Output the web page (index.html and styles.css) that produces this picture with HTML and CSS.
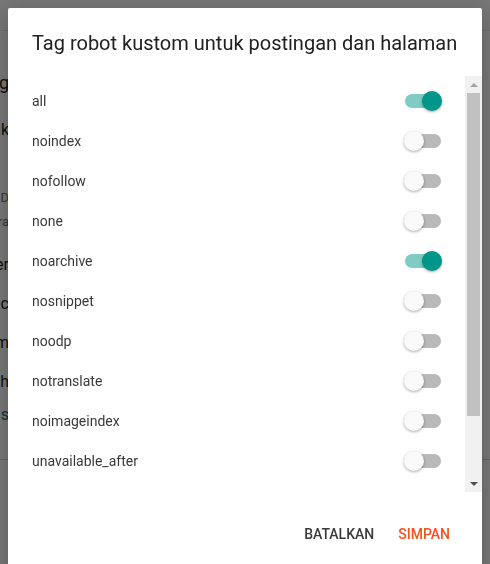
FILE: index.html
```html
<!DOCTYPE html>
<html lang="id">
<head>
    <meta charset="UTF-8">
    <meta name="viewport" content="width=device-width, initial-scale=1.0">
    <title>Tag robot kustom</title>
    <link rel="stylesheet" href="styles.css">
</head>
<body>

<!-- settings page behind the dialog -->
<div class="page">
    <div class="page-header"></div>
    <div class="page-col">
        <div class="page-heading">Crawling</div>
        <div class="page-item page-item-first">Tag robot kustom untuk</div>
        <div class="page-note page-note-first">Deskripsi D</div>
        <div class="page-note">Aktifkan deskripsi para</div>
        <div class="page-item page-item-gap">Tag robot kustom header</div>
        <div class="page-item">Tag robot kustom untuk halaman arsip nc</div>
        <div class="page-item">Tag robot kustom untuk postingan dan halam</div>
        <div class="page-item">Kelola pengalihan h</div>
        <div class="page-link">Pelajari lebih lanjut as</div>
    </div>
    <div class="page-rule"></div>
</div>

<div class="overlay"></div>

<div class="dialog">
    <h2 class="dialog-title">Tag robot kustom untuk postingan dan halaman</h2>

    <div class="dialog-body">
        <div class="robot-list">
            <div class="robot-row">
                <span class="robot-name">all</span>
                <span class="switch on"><span class="switch-track"></span><span class="switch-thumb"></span></span>
            </div>
            <div class="robot-row">
                <span class="robot-name">noindex</span>
                <span class="switch"><span class="switch-track"></span><span class="switch-thumb"></span></span>
            </div>
            <div class="robot-row">
                <span class="robot-name">nofollow</span>
                <span class="switch"><span class="switch-track"></span><span class="switch-thumb"></span></span>
            </div>
            <div class="robot-row">
                <span class="robot-name">none</span>
                <span class="switch"><span class="switch-track"></span><span class="switch-thumb"></span></span>
            </div>
            <div class="robot-row">
                <span class="robot-name">noarchive</span>
                <span class="switch on"><span class="switch-track"></span><span class="switch-thumb"></span></span>
            </div>
            <div class="robot-row">
                <span class="robot-name">nosnippet</span>
                <span class="switch"><span class="switch-track"></span><span class="switch-thumb"></span></span>
            </div>
            <div class="robot-row">
                <span class="robot-name">noodp</span>
                <span class="switch"><span class="switch-track"></span><span class="switch-thumb"></span></span>
            </div>
            <div class="robot-row">
                <span class="robot-name">notranslate</span>
                <span class="switch"><span class="switch-track"></span><span class="switch-thumb"></span></span>
            </div>
            <div class="robot-row">
                <span class="robot-name">noimageindex</span>
                <span class="switch"><span class="switch-track"></span><span class="switch-thumb"></span></span>
            </div>
            <div class="robot-row">
                <span class="robot-name">unavailable_after</span>
                <span class="switch"><span class="switch-track"></span><span class="switch-thumb"></span></span>
            </div>
        </div>

        <!-- scrollbar drawn by hand, the headless browser hides the native one -->
        <div class="scrollbar">
            <div class="scroll-btn"><span class="arrow-up"></span></div>
            <div class="scroll-track"><div class="scroll-thumb"></div></div>
            <div class="scroll-btn"><span class="arrow-down"></span></div>
        </div>
    </div>

    <div class="dialog-actions">
        <button class="btn">Batalkan</button>
        <button class="btn btn-primary">Simpan</button>
    </div>
</div>

</body>
</html>
```

FILE: styles.css
```css
html, body {
    height: 100%;
}

body {
    margin: 0;
    overflow: hidden;
    background-color: #ffffff;
    font-family: Roboto, "Noto Sans", Arial, sans-serif;
    color: #212121;
}

/* page behind */
.page {
    height: 100%;
}

.page-header {
    height: 30px;
    border-bottom: 1px solid #e8e8e8;
    background-color: #f7f7f7;
}

.page-col {
    width: 9px;
    display: flex;
    flex-direction: column;
    align-items: flex-end;
    white-space: nowrap;
    padding-top: 42px;
}

.page-col > div {
    height: 20px;
    line-height: 20px;
}

.page-heading {
    font-size: 18px;
}

.page-item {
    font-size: 16px;
    margin-top: 19px;
    color: #212121;
}

.page-item-first {
    margin-top: 27px;
}

.page-item-gap {
    margin-top: 23px;
}

.page-note {
    font-size: 13px;
    margin-top: 4px;
    color: #757575;
}

.page-note-first {
    margin-top: 48px;
}

.page-link {
    font-size: 16px;
    margin-top: 13px;
    color: #0b7285;
}

.page-rule {
    margin-top: 34px;
    border-top: 1px solid #d6d6d6;
}

.overlay {
    position: fixed;
    inset: 0;
    background-color: rgba(0, 0, 0, 0.52);
}

/* dialog */
.dialog {
    position: fixed;
    top: 8px;
    left: 8px;
    width: 474px;
    background-color: #ffffff;
    border-radius: 2px;
    box-shadow: 0px 8px 24px rgba(0, 0, 0, 0.3);
}

.dialog-title {
    margin: 0;
    padding: 21px 24px 0;
    margin-bottom: 19px;
    font-size: 20px;
    font-weight: 400;
    line-height: 28px;
    color: #212121;
}

.dialog-body {
    height: 416px;
    display: flex;
}

.robot-list {
    flex: 1;
    overflow: hidden;
    padding-top: 5px;
}

.robot-row {
    height: 40px;
    display: flex;
    align-items: center;
    justify-content: space-between;
    padding: 0 23px 0 24px;
}

.robot-name {
    font-size: 14px;
    line-height: 20px;
    color: #3a3a3a;
}

/* toggle switch */
.switch {
    position: relative;
    width: 38px;
    height: 20px;
}

.switch-track {
    position: absolute;
    left: 1px;
    right: 1px;
    top: 3px;
    height: 14px;
    border-radius: 7px;
    background-color: #b9b9b9;
}

.switch-thumb {
    position: absolute;
    top: 0;
    left: 0;
    width: 20px;
    height: 20px;
    border-radius: 50%;
    background-color: #fafafa;
    box-shadow: 0px 1px 3px rgba(0, 0, 0, 0.35);
}

.switch.on .switch-track {
    background-color: #80cbc4;
}

.switch.on .switch-thumb {
    left: 18px;
    background-color: #009688;
}

/* scrollbar */
.scrollbar {
    width: 17px;
    display: flex;
    flex-direction: column;
    background-color: #f1f1f1;
}

.scroll-btn {
    height: 17px;
    display: flex;
    align-items: center;
    justify-content: center;
}

.arrow-up {
    border-left: 4px solid transparent;
    border-right: 4px solid transparent;
    border-bottom: 4px solid #a3a3a3;
}

.arrow-down {
    border-left: 4px solid transparent;
    border-right: 4px solid transparent;
    border-top: 4px solid #505050;
}

.scroll-track {
    flex: 1;
    padding: 0 2px;
}

.scroll-thumb {
    height: 323px;
    background-color: #c1c1c1;
}

/* actions */
.dialog-actions {
    display: flex;
    justify-content: flex-end;
    gap: 8px;
    padding: 24px 24px 24px;
}

.btn {
    height: 36px;
    padding: 0 8px;
    border: none;
    background: none;
    font-family: Roboto, Arial, sans-serif;
    font-size: 14px;
    font-weight: 500;
    text-transform: uppercase;
    color: #3a3a3a;
    cursor: pointer;
}

.btn-primary {
    color: #f4511e;
}
```
